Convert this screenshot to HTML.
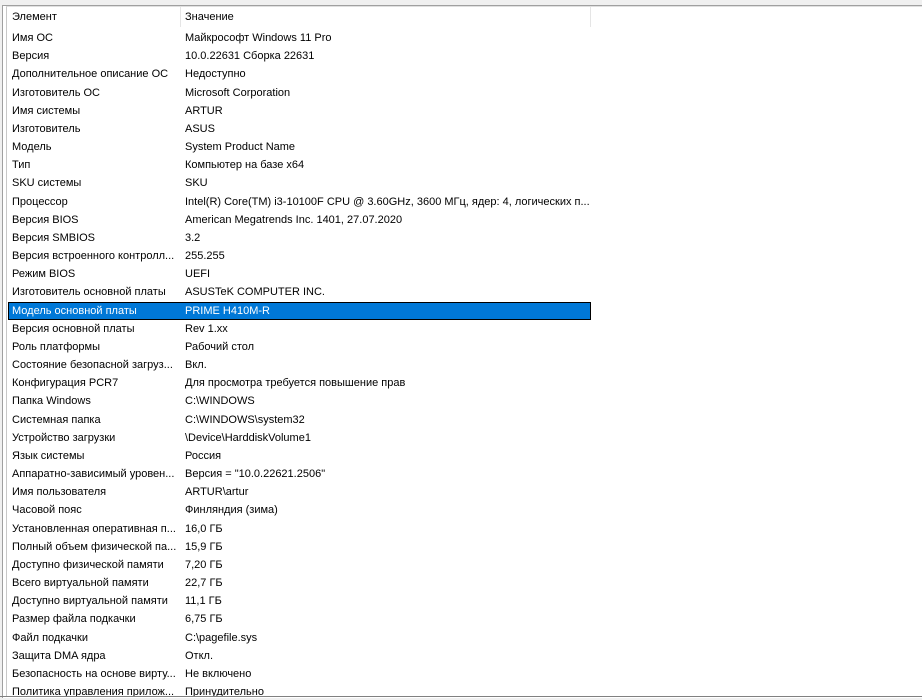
<!DOCTYPE html>
<html><head><meta charset="utf-8">
<style>
html,body{margin:0;padding:0;}
body{width:922px;height:700px;background:#f0f0f0;position:relative;overflow:hidden;font-family:"Liberation Sans","DejaVu Sans",sans-serif;font-size:11px;color:#000;}
.outer{position:absolute;left:2px;top:5px;width:930px;height:692px;border-left:1px solid #a0a0a0;border-top:1px solid #a0a0a0;background:#fff;}
.panel{position:absolute;left:6px;top:6px;width:930px;height:690px;background:#fff;border-left:1px solid #c8c8c8;border-top:1px solid #e0e0e0;overflow:hidden;}
.bottom{position:absolute;left:0;top:696px;width:922px;height:1px;background:#808080;}
.hdr{position:absolute;left:0;top:0;height:20px;width:930px;}
.hsep{position:absolute;top:0;width:1px;height:20px;background:#e5e5e5;}
.row{position:absolute;left:1px;width:583px;height:18px;line-height:18px;white-space:nowrap;}
.c1{position:absolute;left:4px;width:166px;overflow:hidden;}
.c2{position:absolute;left:177px;width:405px;overflow:hidden;}
.sel{background:#0078d7;color:#fff;outline:1px solid #000;outline-offset:-1px;}
</style></head><body>
<div class="outer"></div>
<div class="panel">
<div class="hdr">
<div class="row" style="top:1px"><span class="c1">Элемент</span><span class="c2">Значение</span></div>
<div class="hsep" style="left:173px"></div>
<div class="hsep" style="left:583px"></div>
</div>
<div id="rows"></div>
</div>
<div class="bottom"></div>
<script>
var d=[["Имя ОС","Майкрософт Windows 11 Pro"],["Версия","10.0.22631 Сборка 22631"],["Дополнительное описание ОС","Недоступно"],["Изготовитель ОС","Microsoft Corporation"],["Имя системы","ARTUR"],["Изготовитель","ASUS"],["Модель","System Product Name"],["Тип","Компьютер на базе x64"],["SKU системы","SKU"],["Процессор","Intel(R) Core(TM) i3-10100F CPU @ 3.60GHz, 3600 МГц, ядер: 4, логических п..."],["Версия BIOS","American Megatrends Inc. 1401, 27.07.2020"],["Версия SMBIOS","3.2"],["Версия встроенного контролл...","255.255"],["Режим BIOS","UEFI"],["Изготовитель основной платы","ASUSTeK COMPUTER INC."],["Модель основной платы","PRIME H410M-R"],["Версия основной платы","Rev 1.xx"],["Роль платформы","Рабочий стол"],["Состояние безопасной загруз...","Вкл."],["Конфигурация PCR7","Для просмотра требуется повышение прав"],["Папка Windows","C:\\WINDOWS"],["Системная папка","C:\\WINDOWS\\system32"],["Устройство загрузки","\\Device\\HarddiskVolume1"],["Язык системы","Россия"],["Аппаратно-зависимый уровен...","Версия = \"10.0.22621.2506\""],["Имя пользователя","ARTUR\\artur"],["Часовой пояс","Финляндия (зима)"],["Установленная оперативная п...","16,0 ГБ"],["Полный объем физической па...","15,9 ГБ"],["Доступно физической памяти","7,20 ГБ"],["Всего виртуальной памяти","22,7 ГБ"],["Доступно виртуальной памяти","11,1 ГБ"],["Размер файла подкачки","6,75 ГБ"],["Файл подкачки","C:\\pagefile.sys"],["Защита DMA ядра","Откл."],["Безопасность на основе вирту...","Не включено"],["Политика управления прилож...","Принудительно"]];
var h="";
for(var i=0;i<d.length;i++){
 var t=Math.round(22+i*18.17);
 h+='<div class="row'+(i==15?' sel':'')+'" style="top:'+t+'px"><span class="c1"></span><span class="c2"></span></div>';
}
var r=document.getElementById("rows");r.innerHTML=h;
var rs=r.children;
for(var i=0;i<d.length;i++){rs[i].children[0].textContent=d[i][0];rs[i].children[1].textContent=d[i][1];}
</script>
</body></html>
